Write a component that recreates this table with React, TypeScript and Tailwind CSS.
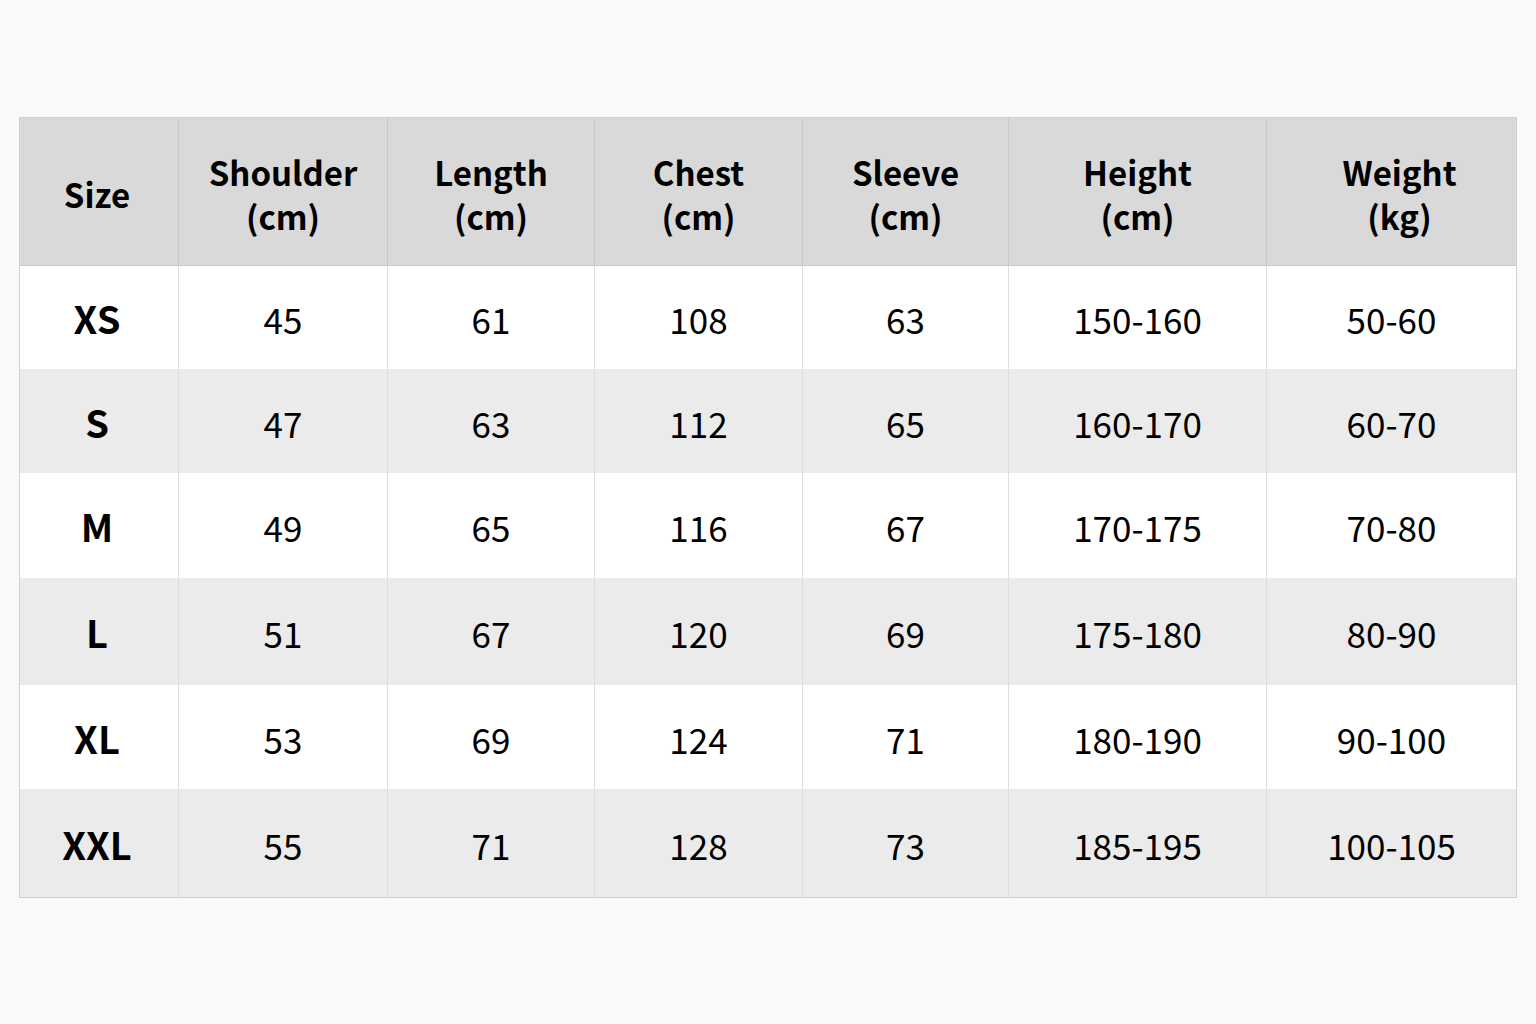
const columns = [
  { label: "Size", unit: "", width: "w-[158px]" },
  { label: "Shoulder", unit: "(cm)", width: "w-[209px]" },
  { label: "Length", unit: "(cm)", width: "w-[207px]" },
  { label: "Chest", unit: "(cm)", width: "w-[208px]" },
  { label: "Sleeve", unit: "(cm)", width: "w-[206px]" },
  { label: "Height", unit: "(cm)", width: "w-[258px]" },
  { label: "Weight", unit: "(kg)", width: "flex-1" },
]

const rows = [
  { size: "XS", values: ["45", "61", "108", "63", "150-160", "50-60"], h: "h-[103px]" },
  { size: "S", values: ["47", "63", "112", "65", "160-170", "60-70"], h: "h-[104px]" },
  { size: "M", values: ["49", "65", "116", "67", "170-175", "70-80"], h: "h-[105px]" },
  { size: "L", values: ["51", "67", "120", "69", "175-180", "80-90"], h: "h-[107px]" },
  { size: "XL", values: ["53", "69", "124", "71", "180-190", "90-100"], h: "h-[104px]" },
  { size: "XXL", values: ["55", "71", "128", "73", "185-195", "100-105"], h: "h-[108px]" },
]

export default function App() {
  return (
    <div
      className="w-[1536px] h-[1024px] bg-[#f9f9f9] pt-[117px] pl-[19px]"
      style={{ fontFamily: '"Noto Sans CJK SC", "Noto Sans", sans-serif' }}
    >
      <div className="w-[1498px] border border-[#cfcfcf] text-black">
        {/* Header */}
        <div className="flex h-[148px] bg-[#d9d9d9] border-b border-[#c9c9c9]">
          {columns.map((col, i) => (
            <div
              key={col.label}
              className={`${col.width} flex flex-col items-center justify-center pt-[4px] font-bold text-[33px] leading-[44px] ${
                i > 0 ? "border-l border-[#c6c6c6]" : ""
              } ${i === 6 ? "pl-[16px]" : ""} ${i === 0 ? "pr-[4px]" : ""}`}
            >
              <span>{col.label}</span>
              {col.unit && <span>{col.unit}</span>}
            </div>
          ))}
        </div>

        {/* Body */}
        {rows.map((row, r) => (
          <div
            key={row.size}
            className={`flex ${row.h} ${r % 2 === 0 ? "bg-white" : "bg-[#ebebeb]"}`}
          >
            <div className={`${columns[0].width} flex items-center justify-center pr-[4px] font-bold text-[38px]`}>
              {row.size}
            </div>
            {row.values.map((v, i) => (
              <div
                key={i}
                className={`${columns[i + 1].width} flex items-center justify-center pt-[4px] text-[35px] border-l border-[#dedede]`}
              >
                {v}
              </div>
            ))}
          </div>
        ))}
      </div>
    </div>
  )
}
